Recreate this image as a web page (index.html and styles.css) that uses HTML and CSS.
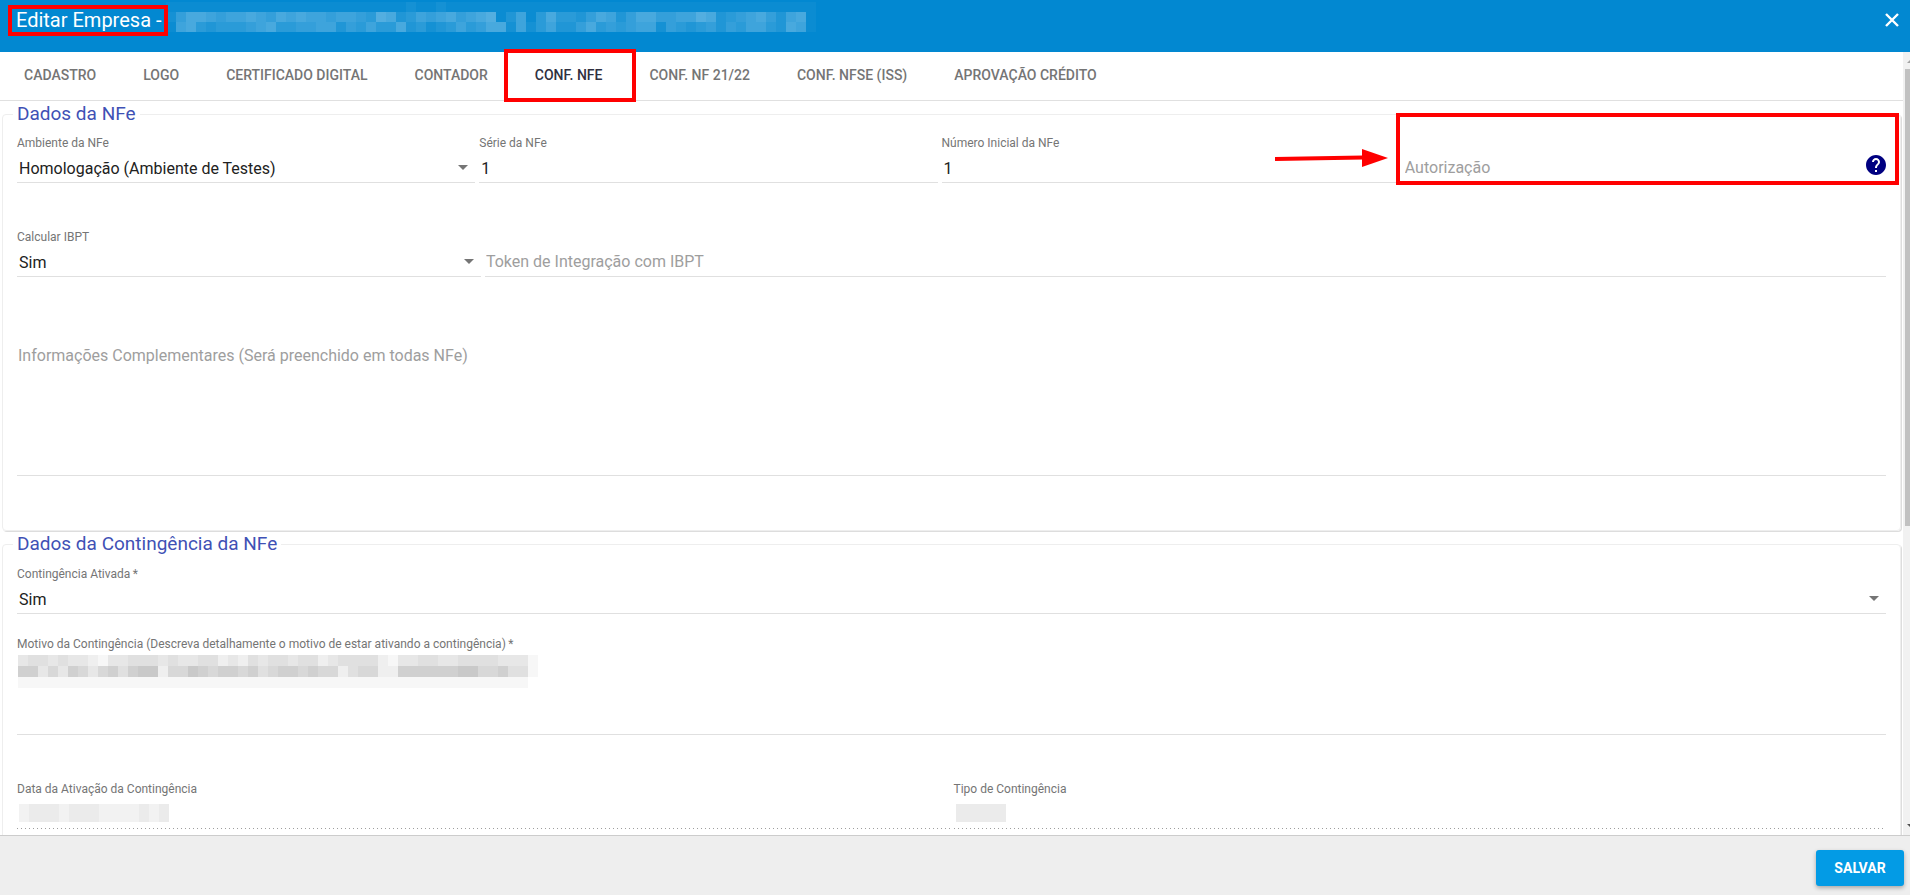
FILE: index.html
```html
<!DOCTYPE html>
<html lang="pt-BR">
<head>
<meta charset="utf-8">
<title>Editar Empresa</title>
<link rel="stylesheet" href="styles.css">
</head>
<body>
<div class="dialog">
  <header class="toolbar">
    <h1 class="title">Editar Empresa -<span class="mark mark-title"></span></h1>
    <svg class="mosaic mosaic-title" width="660" height="40" data-cell="10 10" data-color="#ffffff" data-scale="0.04" aria-hidden="true"
      data-rows="111111111111111111111111211211111111111111111111111111111111111110|257765667657676656654873465675678136147443576357755668734567536710|167434445674455663546447342346457726246335745456625434535466437610"></svg>
    <button class="close" type="button" aria-label="Fechar">
      <svg width="16" height="16" viewBox="0 0 16 16"><path d="M2 2L14 14M14 2L2 14" stroke="#fff" stroke-width="2.4" fill="none"/></svg>
    </button>
  </header>

  <div class="middle">
    <main class="content">
      <nav class="tabs" role="tablist">
        <button class="tab" role="tab" type="button">Cadastro</button>
        <button class="tab" role="tab" type="button">Logo</button>
        <button class="tab" role="tab" type="button">Certificado Digital</button>
        <button class="tab" role="tab" type="button">Contador</button>
        <button class="tab active" role="tab" type="button" aria-selected="true">Conf. NFe<span class="mark mark-tab"></span></button>
        <button class="tab" role="tab" type="button">Conf. NF 21/22</button>
        <button class="tab" role="tab" type="button">Conf. NFSe (ISS)</button>
        <button class="tab" role="tab" type="button">Aprovação Crédito</button>
      </nav>

      <div class="groups">
      <fieldset class="group">
        <legend>Dados da NFe</legend>
        <div class="row row-four">
          <div class="field">
            <label for="ambiente">Ambiente da NFe</label>
            <select id="ambiente" class="control"><option>Homologação (Ambiente de Testes)</option></select>
            <svg class="caret" width="10" height="5" viewBox="0 0 10 5"><path d="M0 0H10L5 5Z"/></svg>
          </div>
          <div class="field">
            <label for="serie">Série da NFe</label>
            <input id="serie" class="control" type="text" value="1">
          </div>
          <div class="field">
            <label for="numero">Número Inicial da NFe</label>
            <input id="numero" class="control" type="text" value="1">
          </div>
          <div class="field">
            <input id="autorizacao" class="control empty" type="text" placeholder="Autorização" aria-label="Autorização">
          </div>
          <button class="help" type="button" aria-label="Ajuda">
            <svg width="24" height="24" viewBox="0 0 24 24"><path fill="#000080" d="M12 2C6.48 2 2 6.48 2 12s4.480 10 10 10 10-4.480 10-10S17.520 2 12 2zm1 17h-2v-2h2v2zm2.070-7.750l-.9.920C13.450 12.900 13 13.500 13 15h-2v-.5c0-1.100.450-2.100 1.170-2.830l1.240-1.260c.370-.360.590-.860.590-1.410 0-1.100-.9-2-2-2s-2 .9-2 2H8c0-2.210 1.790-4 4-4s4 1.790 4 4c0 .880-.360 1.680-.930 2.250z"/></svg>
          </button>
          <span class="mark mark-field"></span>
          <svg class="arrow" width="113" height="18" viewBox="0 0 113 18"><path d="M0 10L88 8.500" stroke="#f00" stroke-width="4"/><path d="M87 0L113 9L87 18Z" fill="#f00"/></svg>
        </div>
        <div class="row row-token">
          <div class="field">
            <label for="ibpt">Calcular IBPT</label>
            <select id="ibpt" class="control"><option>Sim</option></select>
            <svg class="caret" width="10" height="5" viewBox="0 0 10 5"><path d="M0 0H10L5 5Z"/></svg>
          </div>
          <div class="field">
            <input id="token" class="control empty" type="text" placeholder="Token de Integração com IBPT" aria-label="Token de Integração com IBPT">
          </div>
        </div>
        <div class="row">
          <div class="field">
            <textarea id="info" class="control area-large" placeholder="Informações Complementares (Será preenchido em todas NFe)" aria-label="Informações Complementares"></textarea>
          </div>
        </div>
      </fieldset>

      <fieldset class="group">
        <legend>Dados da Contingência da NFe</legend>
        <div class="row row-tight">
          <div class="field">
            <label for="ativada">Contingência Ativada&thinsp;*</label>
            <select id="ativada" class="control"><option>Sim</option></select>
            <svg class="caret" width="10" height="5" viewBox="0 0 10 5"><path d="M0 0H10L5 5Z"/></svg>
          </div>
        </div>
        <div class="row">
          <div class="field">
            <label for="motivo">Motivo da Contingência (Descreva detalhamente o motivo de estar ativando a contingência)&thinsp;*</label>
            <textarea id="motivo" class="control area-small"></textarea>
            <svg class="mosaic mosaic-field" width="521" height="33" data-cell="10 11" data-color="#202020" data-scale="0.035" aria-hidden="true"
              data-rows="3443433213344434334423243443442344442133443344443331|6635365356467725576566564566565524552266666677556441|1111111111111111111111111111111111111111111111111110"></svg>
          </div>
        </div>
        <div class="row row-half">
          <div class="field">
            <label for="data">Data da Ativação da Contingência</label>
            <input id="data" class="control" type="text" disabled>
            <svg class="mosaic mosaic-value" width="150" height="18" data-cell="10 18" data-color="#202020" data-scale="0.03" data-rows="233323332222323" aria-hidden="true"></svg>
          </div>
          <div class="field">
            <label for="tipo">Tipo de Contingência</label>
            <input id="tipo" class="control" type="text" disabled>
            <svg class="mosaic mosaic-value" width="60" height="18" data-cell="10 18" data-color="#202020" data-scale="0.03" data-rows="333330" aria-hidden="true"></svg>
          </div>
        </div>
      </fieldset>
      </div>
    </main>
    <div class="scrollbar" aria-hidden="true">
      <svg class="step" width="7" height="17"><path d="M4 11L7 8V11Z" fill="#a3a3a3"/></svg>
      <div class="track"><div class="thumb"></div></div>
      <svg class="step" width="7" height="17"><path d="M4 6H7V9Z" fill="#505050"/></svg>
    </div>
  </div>

  <footer class="actions">
    <button class="save" type="button">Salvar</button>
  </footer>
</div>
<script src="mosaic.js"></script>
</body>
</html>
```
FILE: styles.css
```css
* { box-sizing: border-box; }

body {
  margin: 0;
  font-family: Roboto, "Liberation Sans", sans-serif;
  font-size: 16px;
  color: #212121;
  background: #fff;
}

button, input, select, textarea { font: inherit; color: inherit; }

.dialog {
  display: flex;
  flex-direction: column;
  height: 100vh;
  overflow: hidden;
}

.toolbar {
  display: flex;
  align-items: flex-start;
  flex: none;
  height: 52px;
  padding: 0 8px 0 16px;
  background: #0288d1;
  color: #fff;
}

.title {
  position: relative;
  margin: 0;
  padding-top: 8px;
  font-size: 20px;
  line-height: 24px;
  font-weight: 400;
}

.mosaic { display: block; }
.mosaic-title { margin: 2px auto 0 4px; }

.close {
  display: flex;
  margin: 12px 2px 0 0;
  padding: 0;
  border: 0;
  background: none;
}

.mark {
  position: absolute;
  z-index: 2;
  border: 4px solid #f00;
  pointer-events: none;
}
.mark-title { inset: 5px -6px -4px -8px; }
.mark-tab { inset: -3px -10px -2px -8px; }
.mark-field { inset: -22px -13px -2px auto; width: 503px; }

.arrow {
  position: absolute;
  top: 14px;
  right: 498px;
}

.middle {
  display: flex;
  flex: 1;
  min-height: 0;
}

.content {
  display: flex;
  flex-direction: column;
  flex: 1;
  min-width: 0;
}

.tabs {
  display: flex;
  flex: none;
  height: 49px;
  padding-left: 1px;
  border-bottom: 1px solid #e0e0e0;
}

.tab {
  position: relative;
  padding: 0 24px 2px 23px;
  border: 0;
  background: none;
  color: #757575;
  font-size: 14px;
  font-weight: 500;
  text-transform: uppercase;
  white-space: nowrap;
}
.tab.active { color: #30303f; }

.groups {
  flex: 1;
  min-height: 0;
  overflow: hidden;
}

.group {
  min-width: 0;
  margin: 2px;
  padding: 10px 14px 8px;
  border: 1px solid #eee;
  border-radius: 4px;
  box-shadow: 1px 1px 0 #ddd;
}
.group + .group { padding-top: 11px; }

.group legend {
  margin-left: -4px;
  padding: 0 4px;
  color: #3f51b5;
  font-size: 19px;
  line-height: 22px;
}

.row {
  position: relative;
  display: grid;
  gap: 4px;
  align-items: end;
  margin-bottom: 46px;
}
.row-four { grid-template-columns: repeat(4, 1fr) 20px; }
.row-token { grid-template-columns: 99fr 299fr; }
.row-half { grid-template-columns: 1fr 1fr; }
.row-tight { margin-bottom: 22px; }

.field {
  position: relative;
  min-width: 0;
}

.field label {
  display: block;
  color: #757575;
  font-size: 12px;
  line-height: 16px;
}

.control {
  display: block;
  width: 100%;
  height: 32px;
  padding: 4px 2px 0;
  border: 0;
  border-bottom: 1px solid #e0e0e0;
  border-radius: 0;
  outline: 0;
  background: none;
  appearance: none;
  resize: none;
  line-height: 24px;
}
.control.empty { padding: 3px 1px 1px; }
.control::placeholder { color: #9e9e9e; opacity: 1; }
.control:disabled {
  border-bottom-color: transparent;
  background: repeating-linear-gradient(90deg, #9e9e9e 0 1px, transparent 1px 4px) left bottom / 100% 1px no-repeat border-box;
}

.area-large { height: 137px; margin-top: 16px; padding: 5px 1px 0; }
.area-small { height: 83px; }

.caret {
  position: absolute;
  right: 7px;
  bottom: 13px;
  fill: #757575;
}

.mosaic-field { position: absolute; left: 1px; top: 19px; }
.mosaic-value { position: absolute; left: 2px; top: 23px; }

.help {
  display: flex;
  justify-content: center;
  padding: 0 0 6px;
  border: 0;
  background: none;
}
.help svg { flex: none; }

.scrollbar {
  display: flex;
  flex-direction: column;
  flex: none;
  width: 7px;
  background: #f1f1f1;
}
.step { flex: none; }
.track { flex: 1; }
.thumb {
  height: 61%;
  margin-left: 2px;
  background: #c1c1c1;
}

.actions {
  display: flex;
  justify-content: flex-end;
  align-items: flex-start;
  flex: none;
  height: 60px;
  padding: 14px 6px 0;
  border-top: 1px solid #ccc;
  background: #eee;
}

.save {
  min-width: 88px;
  height: 36px;
  padding: 0 16px;
  border: 0;
  border-radius: 3px;
  background: #039be5;
  box-shadow: 0 2px 4px rgba(0, 0, 0, 0.3);
  color: #fff;
  font-size: 14px;
  font-weight: 700;
  text-transform: uppercase;
}
```
FILE: mosaic.js
```js
// Fills each censored area with cells; every digit is a cell's strength.
document.querySelectorAll('.mosaic').forEach(function (svg) {
  var cell = svg.dataset.cell.split(' ').map(Number);
  svg.dataset.rows.split('|').forEach(function (row, y) {
    row.split('').forEach(function (digit, x) {
      var rect = document.createElementNS('http://www.w3.org/2000/svg', 'rect');
      rect.setAttribute('x', x * cell[0]);
      rect.setAttribute('y', y * cell[1]);
      rect.setAttribute('width', cell[0]);
      rect.setAttribute('height', cell[1]);
      rect.setAttribute('fill', svg.dataset.color);
      rect.setAttribute('fill-opacity', digit * svg.dataset.scale);
      svg.appendChild(rect);
    });
  });
});
```
